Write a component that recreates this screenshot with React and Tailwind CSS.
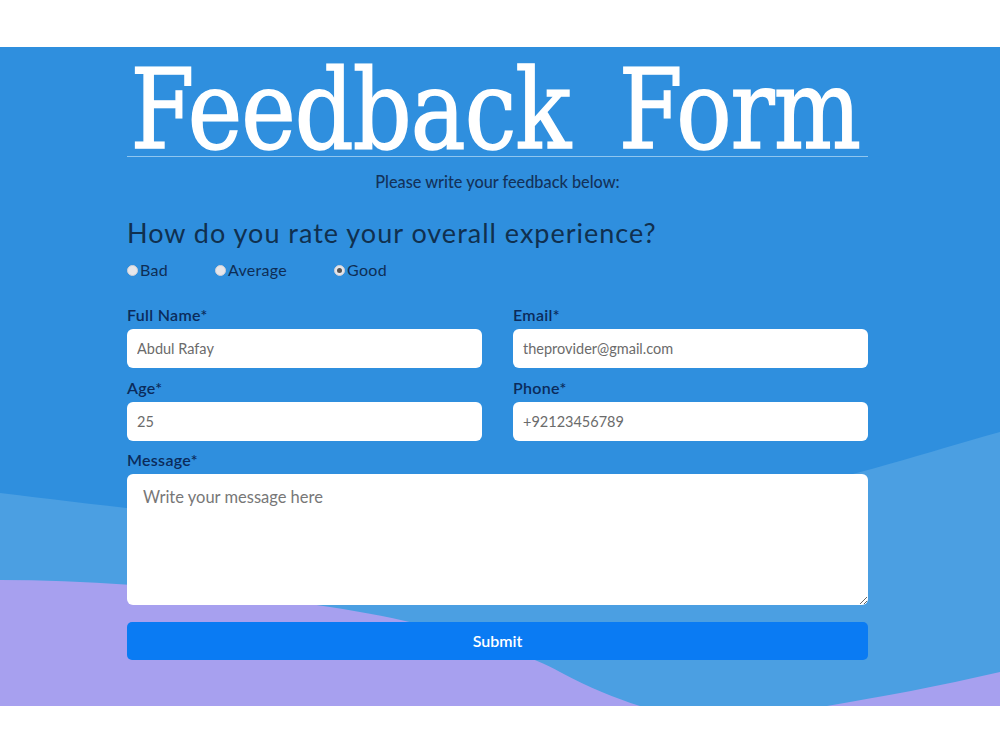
import React, { useState } from "react";

const ratings = ["Bad", "Average", "Good"];

const Field = ({ label, value }) => (
  <div>
    <label className="block text-[16px] leading-none font-semibold tracking-[0.3px] text-[#0b2b5b] mb-[6px]">
      {label}*
    </label>
    <input
      defaultValue={value}
      className="block w-full h-[39px] rounded-[6px] bg-white px-[10px] text-[14.5px] text-[#6b6b6b] outline-none"
    />
  </div>
);

const Waves = () => (
  <svg
    className="absolute inset-0 w-full h-full"
    viewBox="0 47 1000 659"
    preserveAspectRatio="none"
  >
    <path
      d="M0 493 C 180 515 420 545 650 515 C 800 495 900 460 1000 432 L1000 706 L0 706 Z"
      fill="#4b9fe2"
    />
    <path
      d="M0 580 C 110 580 230 592 330 607 C 430 622 520 650 560 672 C 590 688 615 698 640 706 L0 706 Z"
      fill="#a7a0ef"
    />
    <path d="M827 706 C 880 697 940 686 1000 672 L1000 706 Z" fill="#a7a0ef" />
  </svg>
);

export default function App() {
  const [rating, setRating] = useState("Good");

  return (
    <div className="min-h-screen bg-white pt-[47px] font-['Lato',sans-serif]">
      <div className="relative h-[659px] bg-[#2f8fde] overflow-hidden">
        <Waves />

        <div className="relative ml-[127px] w-[741px] pt-[8px]">
          <h1 className="flex justify-center pt-[8px] h-[102px] leading-[94px] border-b border-[#8fc6f0] text-white text-[110px] font-['DejaVu_Serif_Condensed','DejaVu_Serif',serif] font-stretch-condensed whitespace-nowrap">
            <span className="shrink-0 scale-x-[0.93] -translate-x-[2px] tracking-[-1px] [word-spacing:22px] [-webkit-text-stroke:1.5px_white]">
              Feedback Form
            </span>
          </h1>

          <p className="mt-[17px] text-center text-[16.3px] leading-none font-medium text-[#13325a]">
            Please write your feedback below:
          </p>

          <h2 className="mt-[29px] text-[27px] leading-none tracking-[1px] text-[#10304f]">
            How do you rate your overall experience?
          </h2>

          <div className="mt-[16px] flex gap-[47px] text-[16px] leading-none tracking-[0.3px] text-[#0e2d55]">
            {ratings.map((r) => (
              <label
                key={r}
                onClick={() => setRating(r)}
                className="flex items-center gap-[2px] cursor-pointer"
              >
                <span className="w-[11px] h-[11px] rounded-full bg-[#e6e6ea] border border-[#cfcfd6] flex items-center justify-center">
                  {rating === r && (
                    <span className="w-[5px] h-[5px] rounded-full bg-[#555]" />
                  )}
                </span>
                {r}
              </label>
            ))}
          </div>

          <div className="mt-[29px] grid grid-cols-2 gap-x-[31px] gap-y-[12px]">
            <Field label="Full Name" value="Abdul Rafay" />
            <Field label="Email" value="theprovider@gmail.com" />
            <Field label="Age" value="25" />
            <Field label="Phone" value="+92123456789" />
          </div>

          <label className="block mt-[11px] mb-[6px] text-[16px] leading-none font-semibold tracking-[0.3px] text-[#0b2b5b]">
            Message*
          </label>
          <textarea
            placeholder="Write your message here"
            className="block w-full h-[131px] rounded-[6px] bg-white px-[16px] py-[11px] text-[16.5px] text-[#555] placeholder:text-[#777] outline-none"
          />

          <button className="mt-[17px] w-full h-[38px] rounded-[5px] bg-[#0a7bf3] text-white text-[16px] font-semibold">
            Submit
          </button>
        </div>
      </div>
    </div>
  );
}
